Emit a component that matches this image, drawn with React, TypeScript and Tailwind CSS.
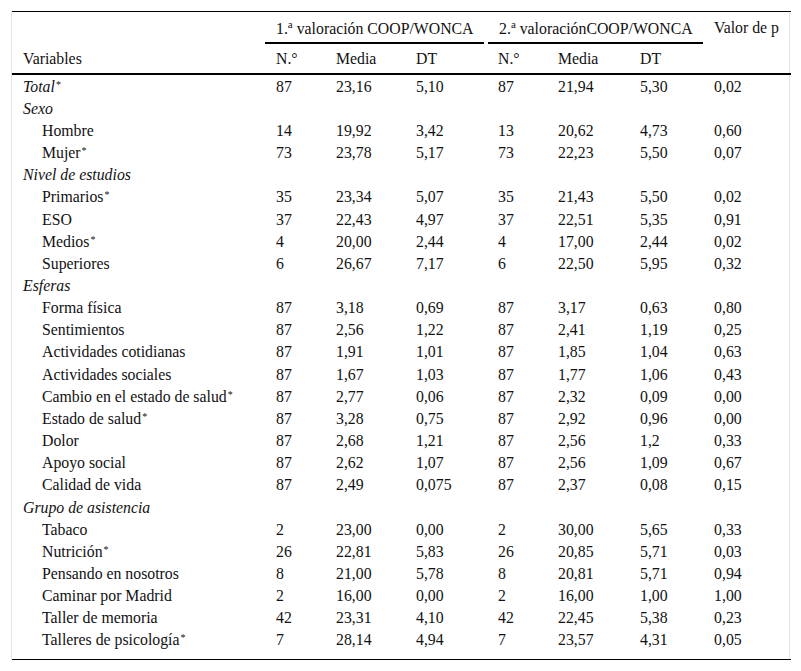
import React from 'react';

type Row = {
  label: string;
  star?: boolean;
  group?: boolean;
  vals?: string[];
};

const rows: Row[] = [
  { label: 'Total', star: true, group: true, vals: ['87', '23,16', '5,10', '87', '21,94', '5,30', '0,02'] },
  { label: 'Sexo', group: true },
  { label: 'Hombre', vals: ['14', '19,92', '3,42', '13', '20,62', '4,73', '0,60'] },
  { label: 'Mujer', star: true, vals: ['73', '23,78', '5,17', '73', '22,23', '5,50', '0,07'] },
  { label: 'Nivel de estudios', group: true },
  { label: 'Primarios', star: true, vals: ['35', '23,34', '5,07', '35', '21,43', '5,50', '0,02'] },
  { label: 'ESO', vals: ['37', '22,43', '4,97', '37', '22,51', '5,35', '0,91'] },
  { label: 'Medios', star: true, vals: ['4', '20,00', '2,44', '4', '17,00', '2,44', '0,02'] },
  { label: 'Superiores', vals: ['6', '26,67', '7,17', '6', '22,50', '5,95', '0,32'] },
  { label: 'Esferas', group: true },
  { label: 'Forma física', vals: ['87', '3,18', '0,69', '87', '3,17', '0,63', '0,80'] },
  { label: 'Sentimientos', vals: ['87', '2,56', '1,22', '87', '2,41', '1,19', '0,25'] },
  { label: 'Actividades cotidianas', vals: ['87', '1,91', '1,01', '87', '1,85', '1,04', '0,63'] },
  { label: 'Actividades sociales', vals: ['87', '1,67', '1,03', '87', '1,77', '1,06', '0,43'] },
  { label: 'Cambio en el estado de salud', star: true, vals: ['87', '2,77', '0,06', '87', '2,32', '0,09', '0,00'] },
  { label: 'Estado de salud', star: true, vals: ['87', '3,28', '0,75', '87', '2,92', '0,96', '0,00'] },
  { label: 'Dolor', vals: ['87', '2,68', '1,21', '87', '2,56', '1,2', '0,33'] },
  { label: 'Apoyo social', vals: ['87', '2,62', '1,07', '87', '2,56', '1,09', '0,67'] },
  { label: 'Calidad de vida', vals: ['87', '2,49', '0,075', '87', '2,37', '0,08', '0,15'] },
  { label: 'Grupo de asistencia', group: true },
  { label: 'Tabaco', vals: ['2', '23,00', '0,00', '2', '30,00', '5,65', '0,33'] },
  { label: 'Nutrición', star: true, vals: ['26', '22,81', '5,83', '26', '20,85', '5,71', '0,03'] },
  { label: 'Pensando en nosotros', vals: ['8', '21,00', '5,78', '8', '20,81', '5,71', '0,94'] },
  { label: 'Caminar por Madrid', vals: ['2', '16,00', '0,00', '2', '16,00', '1,00', '1,00'] },
  { label: 'Taller de memoria', vals: ['42', '23,31', '4,10', '42', '22,45', '5,38', '0,23'] },
  { label: 'Talleres de psicología', star: true, vals: ['7', '28,14', '4,94', '7', '23,57', '4,31', '0,05'] },
];

const widths = ['w-[253px]', 'w-[60px]', 'w-[80px]', 'w-[82px]', 'w-[60px]', 'w-[82px]', 'w-[74px]', 'w-[88px]'];

function Star() {
  return <sup className="text-[10px] not-italic relative -top-[4px] ml-[1px]">*</sup>;
}

export default function App() {
  return (
    <div className="bg-white min-h-[671px] pt-[11px] pl-[11px] font-serif text-[15.8px] leading-[20px] text-[#111]">
      <div className="w-[779px] border-x border-[#e4e4e4]">
        <table className="w-[779px] table-fixed border-collapse font-['Liberation_Serif',serif]">
          <colgroup>
            {widths.map((w, i) => (
              <col key={i} className={w} />
            ))}
          </colgroup>
          <thead>
            <tr className="h-[32px] border-t border-black">
              <th />
              <th colSpan={3} className="p-0 align-bottom font-normal text-left">
                <div className="pl-[11px] pb-[3px] mr-[3px] border-b-2 border-black">
                  1.<sup className="text-[11px]">a</sup> valoración COOP/WONCA
                </div>
              </th>
              <th colSpan={3} className="p-0 align-bottom font-normal text-left">
                <div className="pl-[11px] pb-[3px] ml-[1px] border-b-2 border-black">
                  2.<sup className="text-[11px]">a</sup> valoraciónCOOP/WONCA
                </div>
              </th>
              <th className="pl-[11px] pt-[6px] align-top font-normal text-left">Valor de p</th>
            </tr>
            <tr className="h-[30px] border-b-2 border-black">
              <th className="pl-[11px] pt-[2px] font-normal text-left">Variables</th>
              <th className="pl-[11px] pt-[2px] font-normal text-left">N.°</th>
              <th className="pl-[11px] pt-[2px] font-normal text-left">Media</th>
              <th className="pl-[11px] pt-[2px] font-normal text-left">DT</th>
              <th className="pl-[11px] pt-[2px] font-normal text-left">N.°</th>
              <th className="pl-[11px] pt-[2px] font-normal text-left">Media</th>
              <th className="pl-[11px] pt-[2px] font-normal text-left">DT</th>
              <th />
            </tr>
          </thead>
          <tbody className="border-b-[1.5px] border-black">
            <tr className="h-[2px]">
              <td colSpan={8} />
            </tr>
            {rows.map((r, i) => (
              <tr key={i} className="h-[22.16px]">
                <td className={r.group ? 'pl-[11px] italic' : 'pl-[30px]'}>
                  {r.label}
                  {r.star && <Star />}
                </td>
                {(r.vals || ['', '', '', '', '', '', '']).map((v, j) => (
                  <td key={j} className="pl-[11px]">
                    {v}
                  </td>
                ))}
              </tr>
            ))}
            <tr className="h-[8px]">
              <td colSpan={8} />
            </tr>
          </tbody>
        </table>
      </div>
    </div>
  );
}
